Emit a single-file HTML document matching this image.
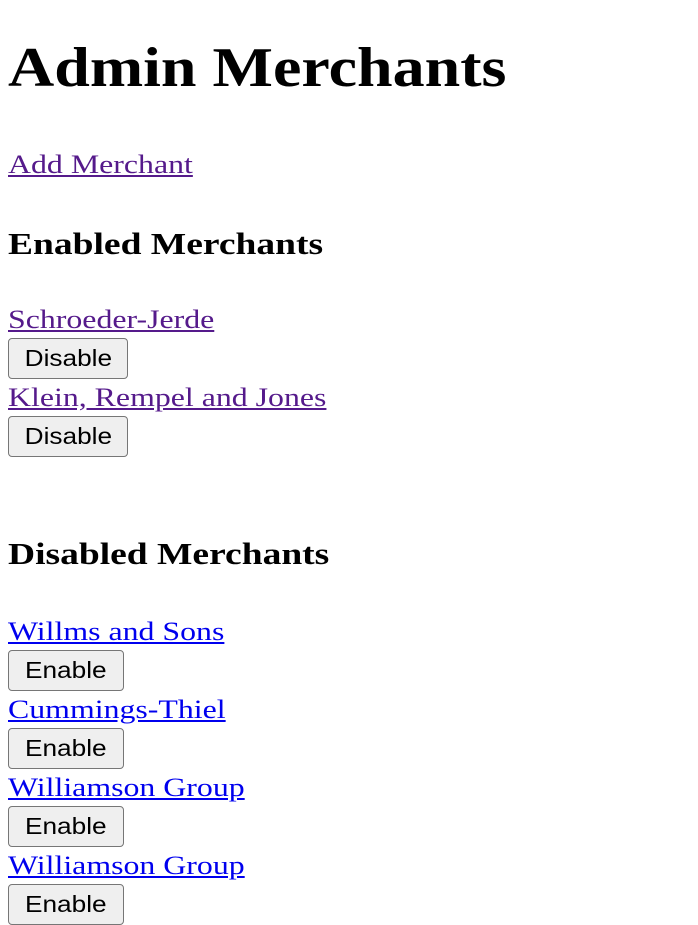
<!DOCTYPE html>
<html><head><meta charset="utf-8"><style>
body{margin:0;background:#fff;font-family:"Liberation Serif",serif;width:698px;height:910px;overflow:hidden;position:relative}
.t{position:absolute;left:8px;white-space:nowrap;transform-origin:0 50%}
a{text-decoration:underline}
.v{color:#551A8B}.u{color:#0000EE}
.l{font-size:26px;line-height:30px;height:30px;transform:scaleX(1.225)}
.h3{font-size:31px;line-height:36px;font-weight:bold;transform:scaleX(1.21)}
.b{position:absolute;left:8px;height:41px;box-sizing:border-box;border:1.5px solid #767676;border-radius:4px;background:#efefef;font-family:"Liberation Sans",sans-serif;font-size:23px;line-height:38px;text-align:center;color:#000}
.b span{display:inline-block;transform:scaleX(1.14)}
</style></head><body>
<div class="t" style="top:34px;font-size:56px;line-height:68px;font-weight:bold;transform:scaleX(1.143)">Admin Merchants</div>
<div class="t l" style="top:150px"><a class="v">Add Merchant</a></div>
<div class="t h3" style="top:226px">Enabled Merchants</div>
<div class="t l" style="top:305px"><a class="v">Schroeder-Jerde</a></div>
<div class="b" style="top:338px;width:120px"><span>Disable</span></div>
<div class="t l" style="top:383px"><a class="v">Klein, Rempel and Jones</a></div>
<div class="b" style="top:416px;width:120px"><span>Disable</span></div>
<div class="t h3" style="top:536px">Disabled Merchants</div>
<div class="t l" style="top:617px"><a class="u">Willms and Sons</a></div>
<div class="b" style="top:650px;width:116px"><span>Enable</span></div>
<div class="t l" style="top:695px"><a class="u">Cummings-Thiel</a></div>
<div class="b" style="top:728px;width:116px"><span>Enable</span></div>
<div class="t l" style="top:773px"><a class="u">Williamson Group</a></div>
<div class="b" style="top:806px;width:116px"><span>Enable</span></div>
<div class="t l" style="top:851px"><a class="u">Williamson Group</a></div>
<div class="b" style="top:884px;width:116px"><span>Enable</span></div>
</body></html>
